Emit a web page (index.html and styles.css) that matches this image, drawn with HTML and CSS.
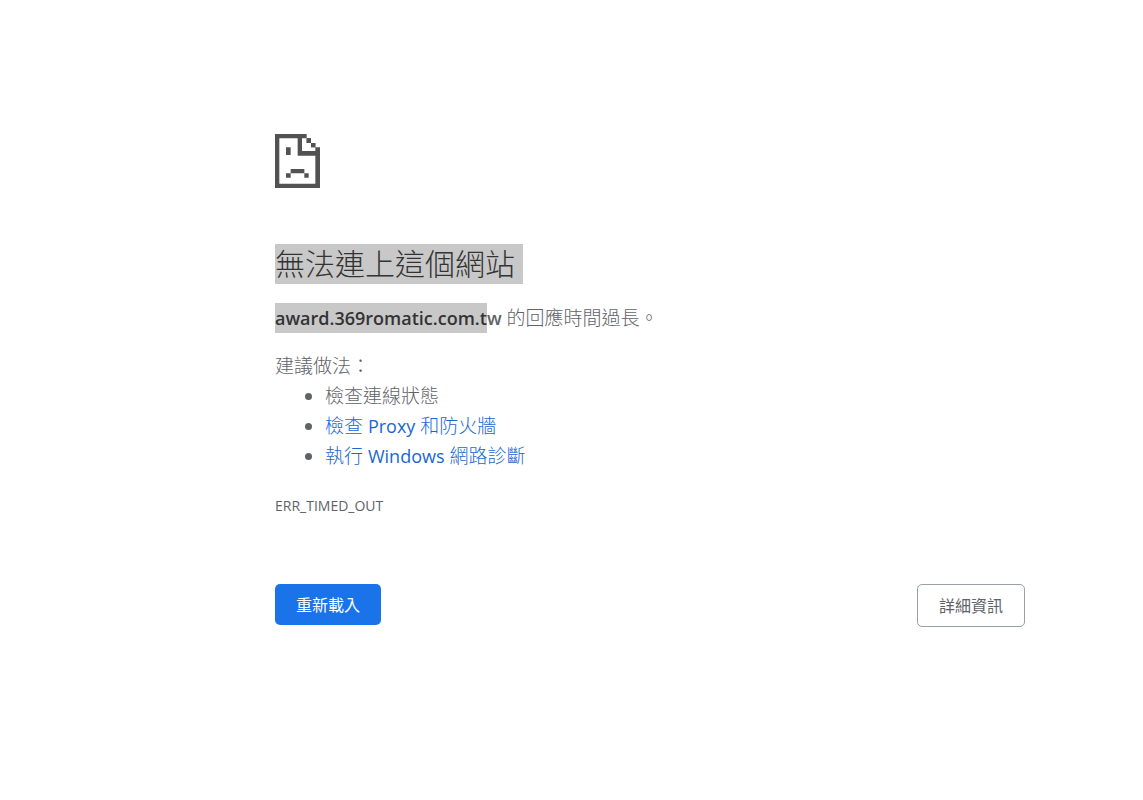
FILE: index.html
```html
<!DOCTYPE html>
<html lang="zh-Hant">
<head>
<meta charset="utf-8">
<meta name="viewport" content="width=device-width, initial-scale=1">
<title>award.369romatic.com.tw</title>
<link rel="stylesheet" href="styles.css">
</head>
<body>
<main class="error-page">
  <svg class="sad-page" viewBox="0 0 135 162" aria-hidden="true">
    <path d="M0 0H95V13H108V27H121V40H135V162H0ZM13 13V149H121V65H68V13Z" fill-rule="evenodd"/>
    <path d="M81 13H95V27H108V40H121V51H81Z" class="sad-page-fold"/>
    <path d="M95 13H108V27H95ZM108 27H121V40H108ZM33 40H47V63H33ZM47 105H88V118H47ZM33 118H47V131H33ZM88 118H101V131H88Z"/>
  </svg>
  <h1 class="title"><mark class="selected title-selection">無法連上這個網站</mark></h1>
  <p class="summary"><strong><mark class="selected">award.369romatic.com.t</mark>w</strong> 的回應時間過長。</p>
  <div class="suggestions">
    <p class="suggestions-label">建議做法：</p>
    <ul class="suggestions-list">
      <li>檢查連線狀態</li>
      <li><a class="link" href="#proxy">檢查 <span class="latin">Proxy</span> 和防火牆</a></li>
      <li><a class="link" href="#diagnose">執行 <span class="latin">Windows</span> 網路診斷</a></li>
    </ul>
  </div>
  <p class="error-code">ERR_TIMED_OUT</p>
  <div class="actions">
    <button class="button button-primary" type="button">重新載入</button>
    <button class="button button-secondary" type="button">詳細資訊</button>
  </div>
</main>
</body>
</html>
```
FILE: styles.css
```css
body {
  margin: 0;
  background: #fff;
  color: #5f6368;
  font-family: "Open Sans", "Noto Sans CJK TC", sans-serif;
  font-size: 18px;
  line-height: 30px;
}

.error-page {
  padding: 134px 118px 40px 275px;
}

.sad-page {
  display: block;
  width: 45px;
  height: 54px;
  fill: #525252;
}

.sad-page-fold {
  fill: #fff;
}

.title {
  margin: 56px 0 19px;
  font-size: 30px;
  font-weight: 300;
  line-height: 40px;
}

.selected {
  display: inline-block;
  background: #c8c8c8;
  color: #333;
}

.title-selection {
  padding-right: 8px;
}

.summary {
  margin: 0 0 18px;
}

.suggestions-label {
  margin: 0;
}

.suggestions,
.summary {
  font-weight: 300;
  font-size: 19px;
}

.summary strong {
  font-weight: 650;
  font-size: 18px;
}

.suggestions-list {
  margin: 0;
  padding-left: 50px;
}

.link {
  color: #1967d2;
  text-decoration: none;
}

.latin {
  font-size: 18px;
  font-weight: 400;
}

.error-code {
  margin: 20px 0 0;
  font-size: 14px;
}

.actions {
  display: flex;
  justify-content: space-between;
  align-items: flex-start;
  margin-top: 63px;
}

.button {
  padding: 11px 21px 9px;
  border: 0;
  border-radius: 5px;
  font-family: inherit;
  font-size: 16px;
  line-height: 21px;
}

.button-primary {
  background: #1a73e8;
  color: #fff;
}

.button-secondary {
  border: 1px solid #9aa0a6;
  background: #fff;
  color: #5f6368;
}
```
